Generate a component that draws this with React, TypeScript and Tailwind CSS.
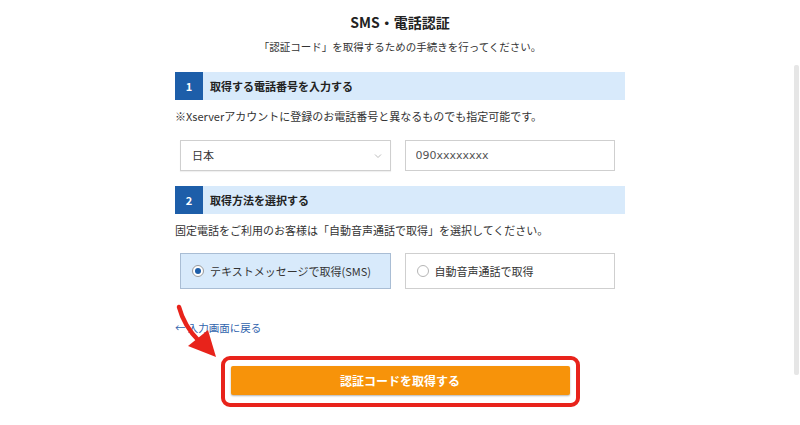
import React, { useState } from 'react';

const font = { fontFamily: '"Noto Sans CJK JP", "Noto Sans", sans-serif' };

const SectionHeader: React.FC<{ num: string; title: string }> = ({ num, title }) => (
  <div className="flex h-[28px] items-stretch bg-[#d8eafb]">
    <div className="flex w-[28px] items-center justify-center bg-[#1d5ea9] text-[11px] font-bold text-white">{num}</div>
    <div className="flex items-center pl-[7px] text-[11px] font-bold text-[#222]">{title}</div>
  </div>
);

export default function App() {
  const [method, setMethod] = useState<'sms' | 'voice'>('sms');
  const [phone, setPhone] = useState('090xxxxxxxx');

  return (
    <div className="relative h-[425px] w-[800px] overflow-hidden bg-white text-[#333]" style={font}>
      <div className="mx-auto flex w-[450px] flex-col">
        <h1 className="mt-[12px] text-center text-[14px] font-bold leading-[20px] text-[#222]">SMS・電話認証</h1>
        <p className="mt-[7px] text-center text-[10.5px] leading-[16px]">「認証コード」を取得するための手続きを行ってください。</p>

        <div className="mt-[17px]">
          <SectionHeader num="1" title="取得する電話番号を入力する" />
        </div>
        <p className="mt-[8px] text-[11px] leading-[16px]">※Xserverアカウントに登録のお電話番号と異なるものでも指定可能です。</p>

        <div className="ml-[5px] mt-[16px] grid w-[435px] grid-cols-2 gap-[14px]">
          <div className="flex h-[31px] items-center justify-between border border-[#cfcfcf] bg-white pl-[11px] pr-[8px] shadow-[0_1px_1px_rgba(0,0,0,0.06)]">
            <span className="text-[11px] text-[#333]">日本</span>
            <svg width="8" height="6" viewBox="0 0 8 6" fill="none" stroke="#bdbdbd" strokeWidth="1">
              <path d="M1 1.5 L4 4.5 L7 1.5" />
            </svg>
          </div>
          <input
            value={phone}
            onChange={(e) => setPhone(e.target.value)}
            className="h-[31px] border border-[#cfcfcf] bg-white px-[10px] text-[11px] text-[#555] outline-none"
            style={{ fontFamily: '"DejaVu Sans", "Noto Sans CJK JP", sans-serif' }}
          />
        </div>

        <div className="mt-[15px]">
          <SectionHeader num="2" title="取得方法を選択する" />
        </div>
        <p className="mt-[8px] text-[11px] leading-[16px]">固定電話をご利用のお客様は「自動音声通話で取得」を選択してください。</p>

        <div className="ml-[5px] mt-[15px] grid w-[435px] grid-cols-2 gap-[14px]">
          <button
            type="button"
            onClick={() => setMethod('sms')}
            className={`flex h-[36px] items-center gap-[6px] border pl-[11px] text-[11px] ${
              method === 'sms' ? 'border-[#a9bdd4] bg-[#d8eafb]' : 'border-[#cfcfcf] bg-white'
            }`}
          >
            <span className="flex h-[12px] w-[12px] items-center justify-center rounded-full border border-[#9a9a9a] bg-white">
              {method === 'sms' && <span className="h-[6px] w-[6px] rounded-full bg-[#1d5ea9]" />}
            </span>
            <span>テキストメッセージで取得(SMS)</span>
          </button>
          <button
            type="button"
            onClick={() => setMethod('voice')}
            className={`flex h-[36px] items-center gap-[6px] border pl-[11px] text-[11px] ${
              method === 'voice' ? 'border-[#a9bdd4] bg-[#d8eafb]' : 'border-[#cfcfcf] bg-white'
            }`}
          >
            <span className="flex h-[12px] w-[12px] items-center justify-center rounded-full border border-[#b5b5b5] bg-white">
              {method === 'voice' && <span className="h-[6px] w-[6px] rounded-full bg-[#1d5ea9]" />}
            </span>
            <span>自動音声通話で取得</span>
          </button>
        </div>

        <a className="mt-[31px] text-[10.5px] leading-[16px] text-[#2f63ad]">← 入力画面に戻る</a>

        <div className="mx-auto mt-[20px] w-[359px] rounded-[9px] border-[4px] border-[#e8231b] px-[6px] pb-[8px] pt-[6px]">
          <button
            type="button"
            className="flex h-[29px] w-full items-center justify-center rounded-[2px] bg-[#f7930a] text-[12px] font-bold text-white shadow-[0_1px_2px_rgba(0,0,0,0.3)]"
          >
            認証コードを取得する
          </button>
        </div>
      </div>

      {/* annotation arrow */}
      <svg className="absolute left-0 top-0" width="800" height="425" viewBox="0 0 800 425" fill="none">
        <path d="M179 307 Q184 326 199 341" stroke="#e8231b" strokeWidth="4.5" strokeLinecap="round" />
        <polygon points="188,346 208,330 216,357" fill="#e8231b" />
      </svg>

      {/* scrollbar */}
      <div className="absolute right-[1px] top-[65px] h-[310px] w-[5px] rounded-[2px] bg-[#e6e6e6]" />
    </div>
  );
}
